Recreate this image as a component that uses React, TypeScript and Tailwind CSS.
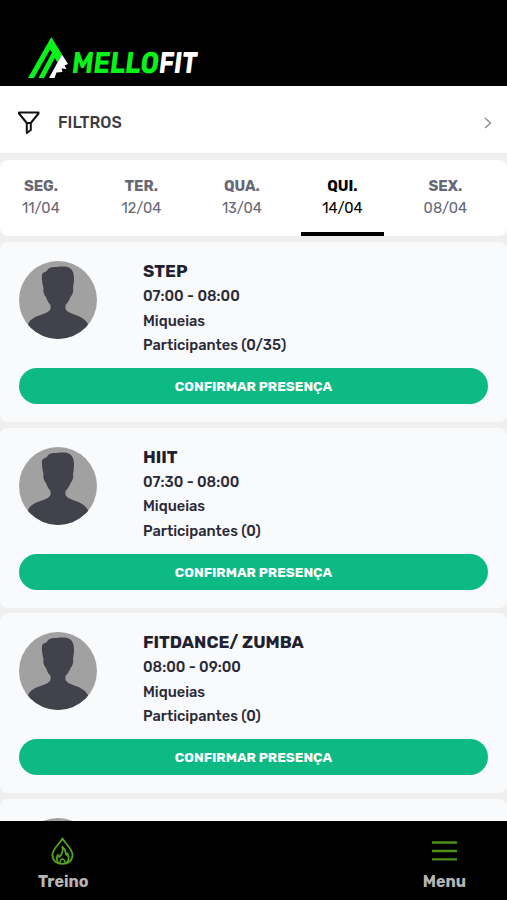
import { useState } from 'react';

// ── Tipos ─────────────────────────────────────────────────────────────────────

interface Dia {
  nome: string;
  data: string;
}

interface Aula {
  titulo: string;
  horario: string;
  professor: string;
  participantes: string;
}

// ── Dados ─────────────────────────────────────────────────────────────────────

const DIAS: Dia[] = [
  { nome: 'SEG.', data: '11/04' },
  { nome: 'TER.', data: '12/04' },
  { nome: 'QUA.', data: '13/04' },
  { nome: 'QUI.', data: '14/04' },
  { nome: 'SEX.', data: '08/04' },
];

const AULAS: Aula[] = [
  { titulo: 'STEP', horario: '07:00 - 08:00', professor: 'Miqueias', participantes: '0/35' },
  { titulo: 'HIIT', horario: '07:30 - 08:00', professor: 'Miqueias', participantes: '0' },
  { titulo: 'FITDANCE/ ZUMBA', horario: '08:00 - 09:00', professor: 'Miqueias', participantes: '0' },
];

// ── Ícones ────────────────────────────────────────────────────────────────────

function Logo() {
  return (
    <svg className="overflow-visible" width="174" height="44" viewBox="0 0 174 44" role="img" aria-label="Mellofit">
      <path d="M23.300 1 34 18.500 29.500 26.500 26.800 22 16 42H10.500L24 16.500 22 13.500 6 42H0Z" fill="#08f31a" />
      <path d="M34 18.500 40 28 36.500 29.500 38.500 33 33.500 32.500 34.500 36 28.500 36.500 26.500 42H21L29.500 26.500Z" fill="#fff" />
      <g
        transform="translate(43 36.500) skewX(-7)"
        fontFamily="Rubik, Roboto, sans-serif"
        fontSize="30"
        fontWeight="700"
      >
        <text x="0" y="0" textLength="87" lengthAdjust="spacingAndGlyphs" fill="#08f31a">
          MELLO
        </text>
        <text x="87" y="0" textLength="38" lengthAdjust="spacingAndGlyphs" fill="#fff">
          FIT
        </text>
      </g>
    </svg>
  );
}

function IconeFiltro() {
  return (
    <svg width="22" height="24" viewBox="0 0 22 24" fill="none" stroke="#111" strokeWidth="2" strokeLinejoin="round">
      <path d="M1 1.500H20.500V2.500L12.800 12H8.800L1 2.500Z" />
      <path d="M8.800 12V22L12.800 19V12" />
    </svg>
  );
}

function IconeSeta() {
  return (
    <svg width="8" height="12" viewBox="0 0 8 12" fill="none" stroke="#8c8c8c" strokeWidth="1.400">
      <path d="M1 1 6.500 6 1 11" />
    </svg>
  );
}

function IconeFogo() {
  return (
    <svg
      className="mr-[2px]"
      width="23"
      height="28"
      viewBox="0 0 23 28"
      fill="none"
      stroke="#55a41f"
      strokeWidth="1.800"
      strokeLinejoin="round"
    >
      <path d="M11.500 1.500C9 6.500 1.500 11.500 1.500 18C1.500 23.500 5.500 26.800 11.500 26.800S21.500 23.500 21.500 18C21.500 11.500 14 6.500 11.500 1.500Z" />
      <path d="M7.500 26C5.300 23.500 5.500 20.500 6.800 18L8.500 19.800C11.300 17 12.300 13.500 11.300 9.800C14.500 12 14.300 15 15.300 18L16.500 16.500C18 19.500 17.800 23.500 15.500 26" />
      <path d="M9 26C8.700 23.500 10 22.300 11.500 21.800C13.300 22.500 14.300 24 14 26" strokeWidth="1.300" />
    </svg>
  );
}

function IconeMenu() {
  return (
    <svg width="25" height="20" viewBox="0 0 25 20" stroke="#4b9118" strokeWidth="2.300">
      <path d="M0 1.500H25M0 10H25M0 18.300H25" />
    </svg>
  );
}

function Avatar() {
  return (
    <svg className="size-[78px] shrink-0 rounded-full bg-[#a1a1a1]" viewBox="0 0 78 78">
      <path
        d="M24.500 27C23 22 22.300 14 23.500 12.500C25 10.500 27 11.500 28.500 9C31 5.500 35 6.300 39 5.800C43 5.300 49 5 52 8C56 12 55.300 20 54 27C54.800 30 53.500 34 51.500 36C50 40 48.500 42 46.500 44V48C50 54.500 63 52.500 69 63C70 67 68 70 66 78H12C9 70 8 66 9.500 62C15 53 28 54.500 31.500 48V44C29.500 42 28 39 27 36C25 34 23.800 30 24.500 27Z"
        fill="#41424b"
      />
    </svg>
  );
}

// ── Card da aula ──────────────────────────────────────────────────────────────

function CardAula({ aula }: { aula: Aula }) {
  return (
    <article className="h-[180px] shrink-0 rounded-lg bg-[#f9fafc] px-[19px] pt-[19px]">
      <div className="flex h-[107px] gap-[46px]">
        <Avatar />
        <div className="text-[14.600px] font-medium leading-[24.500px] text-[#2a2937]">
          <h2 className="-mt-[2px] mb-[0.500px] whitespace-nowrap text-[17.100px] font-bold text-[#21202f]">
            {aula.titulo}
          </h2>
          <p>{aula.horario}</p>
          <p>{aula.professor}</p>
          <p>Participantes ({aula.participantes})</p>
        </div>
      </div>
      <button className="h-[36px] w-full rounded-full bg-[#0dba83] text-[13.500px] font-bold text-white">
        CONFIRMAR PRESENÇA
      </button>
    </article>
  );
}

// ── Tela ──────────────────────────────────────────────────────────────────────

export default function App() {
  const [ativo, setAtivo] = useState(3);

  return (
    <div className="flex h-screen flex-col overflow-hidden bg-[#efefef] font-[Rubik,Roboto,sans-serif]">
      <header className="h-[86px] shrink-0 bg-black pl-7 pt-9">
        <Logo />
      </header>

      <button className="flex h-[67px] shrink-0 items-center bg-white pl-[18px] pr-[15px] pt-[7px]">
        <IconeFiltro />
        <span className="ml-[18px] flex-1 text-left text-[16px] font-medium text-[#3c3c3e]">FILTROS</span>
        <IconeSeta />
      </button>

      <nav className="mt-[7px] flex h-[76px] shrink-0 gap-[17.500px] overflow-hidden rounded-lg bg-white">
        {DIAS.map((dia, i) => (
          <button
            key={dia.nome}
            onClick={() => setAtivo(i)}
            className={`flex w-[83px] shrink-0 flex-col items-center border-b-4 pt-[15px] text-[15px] leading-[22px] first:-ml-[0.600px] last:ml-[2.500px] ${
              i === ativo ? 'border-black text-black' : 'border-transparent text-[#666875]'
            }`}
          >
            <span className="text-[14.800px] font-bold">{dia.nome}</span>
            <span className="text-[14.600px]">{dia.data}</span>
          </button>
        ))}
      </nav>

      <main className="mt-[6px] flex min-h-0 flex-1 flex-col gap-[5.700px] overflow-hidden">
        {AULAS.map((aula) => (
          <CardAula key={aula.horario} aula={aula} />
        ))}
        {/* Próximo card ainda carregando */}
        <article className="h-[180px] shrink-0 rounded-lg bg-[#f9fafc] px-[19px] pt-[19px]">
          <Avatar />
        </article>
      </main>

      <footer className="flex h-[79px] shrink-0 justify-between bg-black pl-[38px] pr-[41px] pt-4 text-[16px] font-bold text-[#b5b5b5]">
        <button className="flex flex-col items-center">
          <IconeFogo />
          <span className="mt-[5px]">Treino</span>
        </button>
        <button className="flex flex-col items-center">
          <span className="flex h-7 items-center">
            <IconeMenu />
          </span>
          <span className="mt-[5px]">Menu</span>
        </button>
      </footer>
    </div>
  );
}
